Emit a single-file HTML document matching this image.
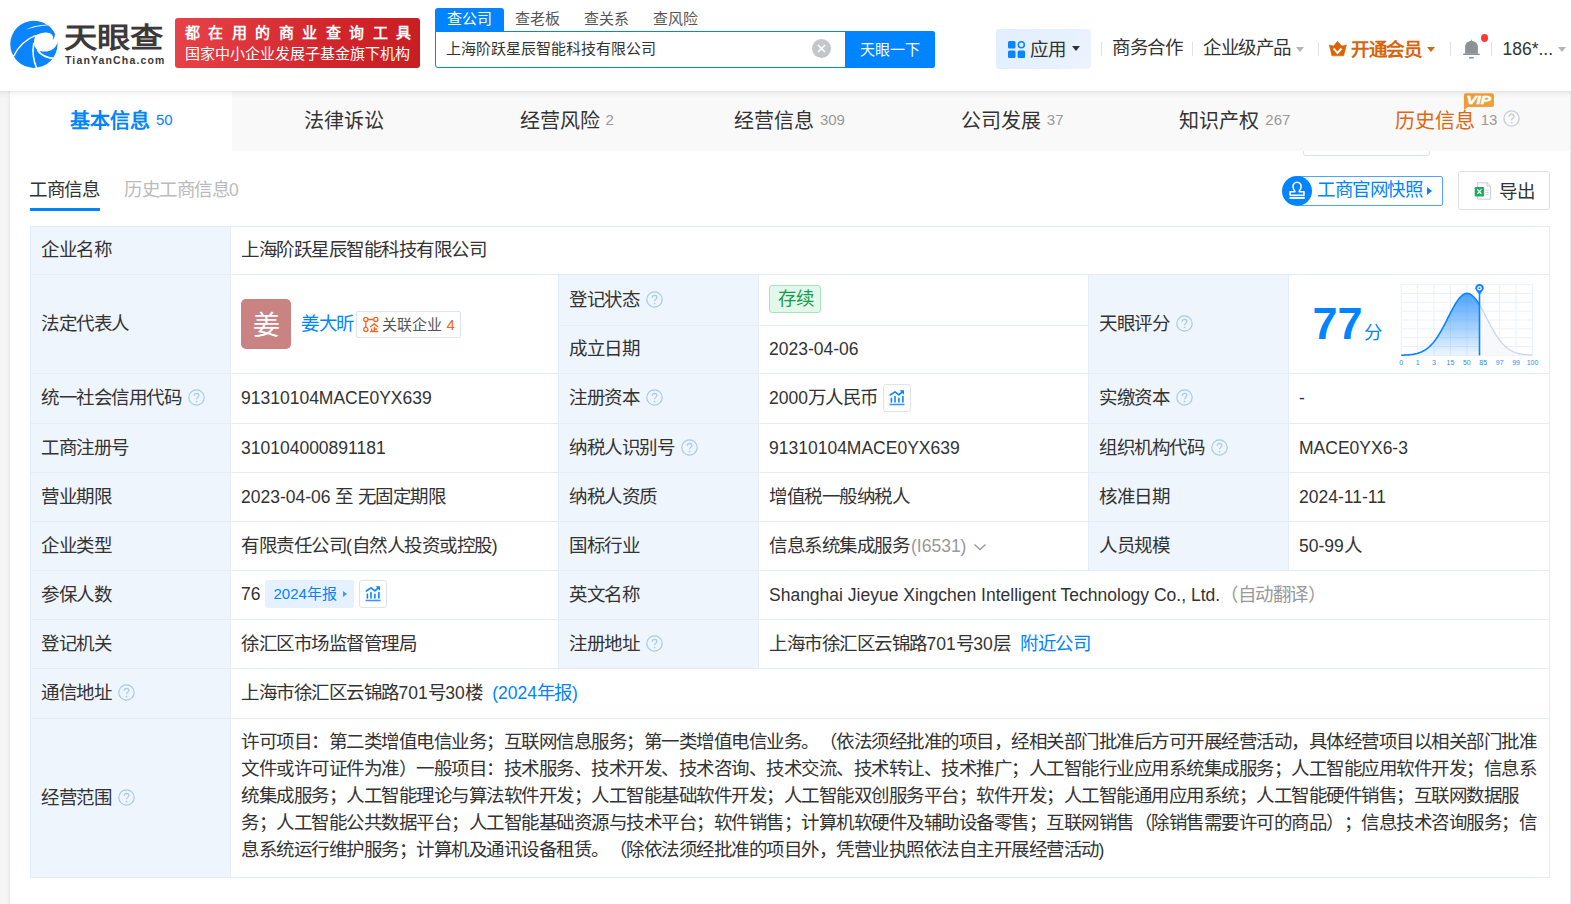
<!DOCTYPE html>
<html lang="zh-CN"><head><meta charset="utf-8">
<style>
*{box-sizing:border-box;margin:0;padding:0}
html,body{width:1571px;height:904px;overflow:hidden}
body{text-spacing-trim:space-all;font-feature-settings:"chws" 0,"halt" 0;background:#f5f5f5;font-family:"Liberation Sans",sans-serif;color:#333;position:relative}
.abs{position:absolute}
#hdr{position:absolute;left:0;top:0;width:1571px;height:91px;background:#fff}
#card{position:absolute;left:10px;top:91px;width:1560px;height:813px;background:#fff}
#rstrip{position:absolute;left:1570px;top:91px;width:1px;height:813px;background:#ebebeb}
.tabbar{position:absolute;left:10px;top:91px;width:1560px;height:60px;background:#f9f9f9}
.tab{position:absolute;top:91px;height:60px;padding-bottom:3px;display:flex;align-items:center;justify-content:center;font-size:20px;color:#333;white-space:nowrap}
.tab .n{font-size:15px;color:#999;margin-left:6px}
.cell{position:absolute;display:flex;align-items:center;padding-left:10px;font-size:17.5px;white-space:nowrap}
.lb{background:#eef5fd}
.hl{position:absolute;height:1px;background:#e3edf7}
.vl{position:absolute;width:1px;background:#e3edf7}
.q{display:inline-block;width:17px;height:17px;border:1.3px solid #a9cdec;border-radius:50%;color:#a9cdec;font-size:12px;line-height:14px;text-align:center;margin-left:7px;font-family:"Liberation Sans",sans-serif}
.blue{color:#0084ff}
.gray{color:#999}
.avatar{display:inline-block;width:50px;height:50px;border-radius:5px;background:#c98383;color:#fff;font-size:27px;line-height:54px;text-align:center}
.rel{display:inline-flex;align-items:center;height:27px;border:1px solid #dfe3ea;border-radius:2px;padding:0 5px 0 6px;margin-left:2px;font-size:15px;color:#555;position:relative;top:1px}
.tag{display:inline-block;height:28px;line-height:26px;padding:0 7px 0 8px;position:relative;top:-1px;border:1px solid #a9e3c0;background:#e2f8ea;color:#179c4c;border-radius:3px;font-size:17.5px}
.score{font-size:45px;font-weight:bold;color:#0084ff;margin-left:13.5px;line-height:50px}
.fen{font-size:17.5px;color:#0084ff;margin-left:1px;margin-top:14px}
.ib{display:inline-flex;align-items:center;justify-content:center;width:28px;height:28px;border:1px solid #dfe3ea;border-radius:3px;margin-left:5px}
.rep{display:inline-flex;align-items:center;height:28px;padding:0 7px 0 8px;background:#e5f1fe;color:#0084ff;border-radius:3px;font-size:15px;margin-left:5px}
.tri{display:inline-block;border-left:4.5px solid #3d98ff;border-top:3.5px solid transparent;border-bottom:3.5px solid transparent;margin-left:6px}
.scope{white-space:nowrap;line-height:27px;font-size:17.5px;position:relative;top:-1px}
.c{font-style:normal;font-size:18.5px;letter-spacing:-1.5px;line-height:0;position:relative;top:0px}
.rel .c,.rep .c,.avatar .c{letter-spacing:0;font-size:inherit;top:0}
.in{display:block;white-space:nowrap;line-height:24px;margin-top:-1px}
.in .avatar,.in .rel,.in .tag,.in .ib,.in .rep,.in svg,.in .q{vertical-align:middle}
.qi{margin-left:7px;position:relative;top:-1.5px}
</style></head><body>
<div id="hdr">
<svg width="52" height="52" viewBox="0 0 52 52" style="position:absolute;left:8px;top:18px">
<circle cx="25.9" cy="26.3" r="23.6" fill="#0a84ff"/>
<path d="M17.6,11.8 C23,8.6 31,6.6 40.5,6.4 L41,7.2 C33,7.6 24,9.6 17.6,11.8 Z" fill="#fff"/>
<path d="M5.2,38.8 C10,29 17,21.5 27.8,17.4" fill="none" stroke="#fff" stroke-width="1.5"/>
<path d="M27.4,17.6 C31,15.6 35,14.5 38.5,14.6 C42.5,14.8 45,17 45.2,19.6 C45.3,20.5 45,21.3 44.6,22.4 C45.8,21.2 46.6,19 46.9,16.5 L52,16.5 L52,24.2 L49.6,24.2 C48.5,28.5 45,32 40,33.2 C36,34 32,33.2 29.9,32.4 C28,31 26.6,28.5 25.9,26.2 C25.9,23 26.5,19.5 27.4,17.6 Z" fill="#fff"/>
<path d="M25.8,25 C24.4,33 25,42 28.8,50.5" fill="none" stroke="#fff" stroke-width="1.6"/>
<path d="M29.4,32 C32,36 36.5,39.5 46.5,40.6" fill="none" stroke="#fff" stroke-width="1.8"/>
</svg>
<div class="abs" id="logotxt" style="left:63.5px;top:21.5px;font-size:33.3px;font-weight:700;color:#3d393a;letter-spacing:0px;line-height:40px;transform:scaleY(0.84);transform-origin:0 0">天眼查</div>
<div class="abs" style="left:65px;top:54px;font-size:10.5px;font-weight:bold;color:#3b3738;letter-spacing:1.15px;line-height:12px">TianYanCha.com</div>
<div class="abs" style="left:175px;top:18px;width:245px;height:50px;border-radius:3px;background:linear-gradient(100deg,#e8434a 0%,#d2262c 60%,#c81d23 100%)"></div>
<div class="abs" style="left:185px;top:23px;width:226px;font-size:15px;font-weight:bold;color:#fff;line-height:20px;display:flex;justify-content:space-between"><span>都</span><span>在</span><span>用</span><span>的</span><span>商</span><span>业</span><span>查</span><span>询</span><span>工</span><span>具</span></div>
<div class="abs" style="left:184.5px;top:44px;font-size:15px;font-weight:500;color:#fff;line-height:20px;letter-spacing:0px">国家中小企业发展子基金旗下机构</div>

<div class="abs" style="left:435px;top:8px;width:69px;height:24px;background:#0084ff;border-radius:3px 3px 0 0"></div>
<div class="abs" style="left:447px;top:8px;font-size:15px;color:#fff;line-height:22px">查公司</div>
<div class="abs" style="left:515px;top:8px;font-size:15px;color:#555;line-height:22px">查老板</div>
<div class="abs" style="left:584px;top:8px;font-size:15px;color:#555;line-height:22px">查关系</div>
<div class="abs" style="left:653px;top:8px;font-size:15px;color:#555;line-height:22px">查风险</div>
<div class="abs" style="left:435px;top:31px;width:500px;height:37px;border:1px solid #0084ff;border-radius:0 3px 3px 3px;background:#fff"></div>
<div class="abs" style="left:446px;top:38px;font-size:15px;color:#333;line-height:22px">上海阶跃星辰智能科技有限公司</div>
<div class="abs" style="left:812px;top:39px;width:19px;height:19px;border-radius:50%;background:#c4c6cc"></div>
<svg class="abs" style="left:812px;top:39px" width="19" height="19"><path d="M6,6 L13,13 M13,6 L6,13" stroke="#fff" stroke-width="1.6"/></svg>
<div class="abs" style="left:845px;top:31px;width:90px;height:37px;background:#0084ff;border-radius:0 3px 3px 0;color:#fff;font-size:15px;line-height:37px;text-align:center">天眼一下</div>

<div class="abs" style="left:996px;top:29px;width:95px;height:40px;border-radius:4px;background:linear-gradient(120deg,#e2efff 0%,#e6f1ff 60%,#edf3fc 100%)"></div>
<svg class="abs" style="left:1007.5px;top:40.5px" width="18" height="18" viewBox="0 0 18 18"><rect x="0" y="0" width="7.5" height="7.5" rx="1.5" fill="#0a84ff"/><circle cx="13.3" cy="3.8" r="3" fill="none" stroke="#0a84ff" stroke-width="1.6"/><rect x="0" y="9.6" width="7.5" height="7.5" rx="1.5" fill="#0a84ff"/><rect x="9.6" y="9.6" width="7.5" height="7.5" rx="1.5" fill="#0a84ff"/></svg>
<div class="abs" style="left:1030px;top:37.5px;font-size:17.5px;color:#333;line-height:24px"><i class="c">应用</i></div>
<div class="abs caret" style="left:1072px;top:46px;border-top:5px solid #333;border-left:4px solid transparent;border-right:4px solid transparent"></div>
<div class="abs" style="left:1101px;top:42px;width:1px;height:14px;background:#e2e2e2"></div>
<div class="abs" style="left:1112px;top:36px;font-size:17.5px;color:#333;line-height:24px"><i class="c">商务合作</i></div>
<div class="abs" style="left:1192px;top:42px;width:1px;height:14px;background:#e2e2e2"></div>
<div class="abs" style="left:1203px;top:36px;font-size:17.5px;color:#333;line-height:24px"><i class="c">企业级产品</i></div>
<div class="abs" style="left:1296px;top:47px;border-top:5px solid #b5b5b5;border-left:4.5px solid transparent;border-right:4.5px solid transparent"></div>
<div class="abs" style="left:1318px;top:42px;width:1px;height:14px;background:#e2e2e2"></div>
<svg class="abs" style="left:1329px;top:41px" width="18" height="16" viewBox="0 0 18 16"><path d="M0.3,3.9 L4.6,5.1 L8.5,0.3 L12.7,5.1 L17.4,3.9 L14.7,14.8 L2.9,14.8 Z" fill="#d9650b" stroke="#d9650b" stroke-width="0.6" stroke-linejoin="round"/><path d="M4.7,7.5 L8.5,12 L12.5,7.5" stroke="#fff" stroke-width="1.9" fill="none"/></svg>
<div class="abs" style="left:1351px;top:37.5px;font-size:17.5px;font-weight:bold;color:#d9650b;line-height:24px"><i class="c">开通会员</i></div>
<div class="abs" style="left:1427px;top:47px;border-top:5px solid #d9650b;border-left:4.5px solid transparent;border-right:4.5px solid transparent"></div>
<div class="abs" style="left:1450px;top:42px;width:1px;height:14px;background:#e2e2e2"></div>
<svg class="abs" style="left:1462px;top:38px" width="20" height="22" viewBox="0 0 20 22"><path d="M9.4,0.9 L10.2,3.4 L8.6,3.4 Z" fill="#8e9196"/><path d="M3.1,15.8 L3.1,9.2 C3.1,5.3 5.8,3.1 9.4,3.1 C13,3.1 15.9,5.3 15.9,9.2 L15.9,15.8 Z" fill="#8e9196"/><rect x="1.1" y="15.6" width="16.6" height="1.4" rx="0.6" fill="#8e9196"/><rect x="7.1" y="19" width="4.7" height="1.5" fill="#8e9196"/></svg>
<div class="abs" style="left:1480.9px;top:34.2px;width:7.2px;height:7.5px;border-radius:50%;background:#fd3a2f"></div>
<div class="abs" style="left:1491px;top:42px;width:1px;height:14px;background:#e2e2e2"></div>
<div class="abs" style="left:1502.5px;top:37px;font-size:17.5px;color:#333;line-height:24px">186*...</div>
<div class="abs" style="left:1558px;top:47px;border-top:5px solid #b5b5b5;border-left:4.5px solid transparent;border-right:4.5px solid transparent"></div>
</div>
<div id="card"></div><div id="rstrip"></div>
<div class="abs" style="left:1303px;top:140px;width:127px;height:16px;border:1px solid #dde1ea;border-radius:3px;background:#fff"></div>
<div class="tabbar"></div>
<div class="abs" style="left:10px;top:91px;width:222px;height:60px;background:#fff"></div>
<div class="abs" style="left:0;top:91px;width:10px;height:813px;background:linear-gradient(90deg,#f5f5f5 0,#f5f5f5 7px,#eaeaea 10px)"></div>
<div class="abs" style="left:0;top:91px;width:1571px;height:7px;background:linear-gradient(rgba(0,0,0,0.075),rgba(0,0,0,0.02) 50%,rgba(0,0,0,0))"></div>
<div class="tab" style="left:10px;width:222.7px;color:#0084ff;font-weight:bold">基本信息<span class="n" style="color:#0084ff;font-weight:normal">50</span></div>
<div class="tab" style="left:232.7px;width:222.7px">法律诉讼</div>
<div class="tab" style="left:455.4px;width:222.7px">经营风险<span class="n">2</span></div>
<div class="tab" style="left:678.1px;width:222.7px">经营信息<span class="n">309</span></div>
<div class="tab" style="left:900.8px;width:222.7px">公司发展<span class="n">37</span></div>
<div class="tab" style="left:1123.5px;width:222.7px">知识产权<span class="n">267</span></div>
<div class="tab" style="left:1346.2px;width:222.7px;color:#e0660f">历史信息<span class="n">13</span><svg width="17" height="17" viewBox="0 0 17 17" style="margin-left:6px;position:relative;top:-1px"><circle cx="8.5" cy="8.5" r="7.6" fill="none" stroke="#c5d0dc" stroke-width="1.4"/><path d="M6.1,6.7 C6.1,5.1 7.2,4.3 8.5,4.3 C10,4.3 11,5.2 11,6.5 C11,8 8.6,8.3 8.6,10.4" fill="none" stroke="#c5d0dc" stroke-width="1.4"/><circle cx="8.6" cy="12.6" r="0.95" fill="#c5d0dc"/></svg></div>
<svg class="abs" style="left:1463px;top:93px" width="32" height="18" viewBox="0 0 32 18"><defs><linearGradient id="vg" x1="0" y1="0" x2="1" y2="1"><stop offset="0" stop-color="#ec9a2e"/><stop offset="1" stop-color="#eea443"/></linearGradient></defs><path d="M2.9,0.2 L29,0.2 Q31,0.2 31,2.2 L31,12 Q31,14 29,14 L4.9,14 L0.9,17.2 L0.9,2.2 Q0.9,0.2 2.9,0.2Z" fill="url(#vg)"/><text x="3.4" y="11.1" font-family="Liberation Sans" font-weight="bold" font-style="italic" font-size="11.5" fill="#fff" stroke="#fff" stroke-width="0.5" textLength="24.6" lengthAdjust="spacingAndGlyphs">VIP</text></svg>

<div class="abs" style="left:29px;top:177.5px;font-size:17.5px;color:#333;line-height:24px"><i class="c">工商信息</i></div>
<div class="abs" style="left:30px;top:208px;width:70px;height:3px;background:#0084ff"></div>
<div class="abs" style="left:124px;top:177.5px;font-size:17.5px;color:#bbb;line-height:24px"><i class="c">历史工商信息</i>0</div>

<div class="abs" style="left:1297px;top:176px;width:146px;height:30px;border:1px solid #4ca5ff;border-radius:2px"></div>
<svg class="abs" style="left:1282px;top:176px" width="30" height="30" viewBox="0 0 30 30"><circle cx="15" cy="15" r="15" fill="#0084ff"/><path d="M8.1,19.2 L8.1,15.7 L12.9,15.7 C12.9,14.6 11.2,13.3 11,11 A4.1,4.1 0 1 1 19.1,11 C18.9,13.3 17.1,14.6 17.1,15.7 L22,15.7 L22,19.2 Z" fill="none" stroke="#fff" stroke-width="1.6" stroke-linejoin="round"/><rect x="7.5" y="20.9" width="15.2" height="2" fill="#fff"/></svg>
<div class="abs" style="left:1317px;top:178px;font-size:17.5px;color:#0084ff;line-height:24px"><i class="c">工商官网快照</i></div>
<div class="abs" style="left:1427px;top:187px;border-left:5px solid #0084ff;border-top:4px solid transparent;border-bottom:4px solid transparent"></div>

<div class="abs" style="left:1458px;top:171px;width:92px;height:39px;border:1px solid #dcdfe6;border-radius:3px"></div>
<svg class="abs" style="left:1474px;top:182px" width="18" height="18" viewBox="0 0 18 18"><path d="M3.5,0.8 L13.2,0.8 L16.6,4.2 L16.6,17.2 L3.5,17.2 Z" fill="#fff" stroke="#c9cdd5" stroke-width="1"/><path d="M13.2,0.8 L13.2,4.2 L16.6,4.2" fill="none" stroke="#c9cdd5" stroke-width="1"/><path d="M11.2,8.4 L14.7,8.4 M11.2,10.4 L14.7,10.4 M11.2,12.4 L14.7,12.4" stroke="#c9cdd5" stroke-width="0.9"/><rect x="0.7" y="4.9" width="9.4" height="9.5" rx="1" fill="#1aad5c"/><path d="M3.4,7.4 L7.4,11.9 M7.4,7.4 L3.4,11.9" stroke="#fff" stroke-width="1.3"/></svg>
<div class="abs" style="left:1499px;top:180px;font-size:17.5px;color:#333;line-height:24px"><i class="c">导出</i></div>

<!--TABLE-->
<div class="abs" style="left:31px;top:227px;width:199px;height:650px;background:#eef5fd"></div>
<div class="abs" style="left:559px;top:275px;width:199px;height:393px;background:#eef5fd"></div>
<div class="abs" style="left:1089px;top:275px;width:199px;height:295px;background:#eef5fd"></div>
<div class="abs" style="left:30px;top:226px;width:1520px;height:1px;background:#e3edf7"></div>
<div class="abs" style="left:30px;top:274px;width:1520px;height:1px;background:#e3edf7"></div>
<div class="abs" style="left:30px;top:373px;width:1520px;height:1px;background:#e3edf7"></div>
<div class="abs" style="left:30px;top:423px;width:1520px;height:1px;background:#e3edf7"></div>
<div class="abs" style="left:30px;top:472px;width:1520px;height:1px;background:#e3edf7"></div>
<div class="abs" style="left:30px;top:521px;width:1520px;height:1px;background:#e3edf7"></div>
<div class="abs" style="left:30px;top:570px;width:1520px;height:1px;background:#e3edf7"></div>
<div class="abs" style="left:30px;top:619px;width:1520px;height:1px;background:#e3edf7"></div>
<div class="abs" style="left:30px;top:668px;width:1520px;height:1px;background:#e3edf7"></div>
<div class="abs" style="left:30px;top:718px;width:1520px;height:1px;background:#e3edf7"></div>
<div class="abs" style="left:30px;top:877px;width:1520px;height:1px;background:#e3edf7"></div>
<div class="abs" style="left:558px;top:325px;width:530px;height:1px;background:#e3edf7"></div>
<div class="abs" style="left:30px;top:226px;width:1px;height:652px;background:#e3edf7"></div>
<div class="abs" style="left:1549px;top:226px;width:1px;height:652px;background:#e3edf7"></div>
<div class="abs" style="left:230px;top:226px;width:1px;height:652px;background:#e3edf7"></div>
<div class="abs" style="left:558px;top:274px;width:1px;height:394px;background:#e3edf7"></div>
<div class="abs" style="left:758px;top:274px;width:1px;height:394px;background:#e3edf7"></div>
<div class="abs" style="left:1088px;top:274px;width:1px;height:296px;background:#e3edf7"></div>
<div class="abs" style="left:1288px;top:274px;width:1px;height:296px;background:#e3edf7"></div>
<div class="cell" style="left:31px;top:227px;height:47px;"><div class="in"><i class="c">企业名称</i></div></div>
<div class="cell" style="left:31px;top:275px;height:98px;"><div class="in"><i class="c">法定代表人</i></div></div>
<div class="cell" style="left:31px;top:374px;height:49px;"><div class="in"><i class="c">统一社会信用代码</i><svg class="qi" width="17" height="17" viewBox="0 0 17 17"><circle cx="8.5" cy="8.5" r="7.7" fill="none" stroke="#a8cae8" stroke-width="1.2"/><path d="M6.2,6.7 C6.2,5.2 7.2,4.4 8.5,4.4 C9.9,4.4 10.9,5.3 10.9,6.5 C10.9,8 8.6,8.3 8.6,10.3" fill="none" stroke="#a8cae8" stroke-width="1.2"/><circle cx="8.6" cy="12.5" r="0.85" fill="#a8cae8"/></svg></div></div>
<div class="cell" style="left:31px;top:424px;height:48px;"><div class="in"><i class="c">工商注册号</i></div></div>
<div class="cell" style="left:31px;top:473px;height:48px;"><div class="in"><i class="c">营业期限</i></div></div>
<div class="cell" style="left:31px;top:522px;height:48px;"><div class="in"><i class="c">企业类型</i></div></div>
<div class="cell" style="left:31px;top:571px;height:48px;"><div class="in"><i class="c">参保人数</i></div></div>
<div class="cell" style="left:31px;top:620px;height:48px;"><div class="in"><i class="c">登记机关</i></div></div>
<div class="cell" style="left:31px;top:669px;height:49px;"><div class="in"><i class="c">通信地址</i><svg class="qi" width="17" height="17" viewBox="0 0 17 17"><circle cx="8.5" cy="8.5" r="7.7" fill="none" stroke="#a8cae8" stroke-width="1.2"/><path d="M6.2,6.7 C6.2,5.2 7.2,4.4 8.5,4.4 C9.9,4.4 10.9,5.3 10.9,6.5 C10.9,8 8.6,8.3 8.6,10.3" fill="none" stroke="#a8cae8" stroke-width="1.2"/><circle cx="8.6" cy="12.5" r="0.85" fill="#a8cae8"/></svg></div></div>
<div class="cell" style="left:31px;top:719px;height:158px;"><div class="in"><i class="c">经营范围</i><svg class="qi" width="17" height="17" viewBox="0 0 17 17"><circle cx="8.5" cy="8.5" r="7.7" fill="none" stroke="#a8cae8" stroke-width="1.2"/><path d="M6.2,6.7 C6.2,5.2 7.2,4.4 8.5,4.4 C9.9,4.4 10.9,5.3 10.9,6.5 C10.9,8 8.6,8.3 8.6,10.3" fill="none" stroke="#a8cae8" stroke-width="1.2"/><circle cx="8.6" cy="12.5" r="0.85" fill="#a8cae8"/></svg></div></div>
<div class="cell" style="left:231px;top:227px;height:47px;"><div class="in"><i class="c">上海阶跃星辰智能科技有限公司</i></div></div>
<div class="cell" style="left:231px;top:275px;height:98px;"><div class="in"><span class="avatar"><i class="c">姜</i></span><span class="blue" style="margin-left:10px;position:relative;top:1.5px"><i class="c">姜大昕</i></span><span class="rel"><svg width="16" height="16" viewBox="0 0 16 16" style="margin-right:3px;position:relative;top:0.5px"><g fill="none" stroke="#f5641e" stroke-width="1.3"><circle cx="2.8" cy="2.5" r="2.1"/><circle cx="12.8" cy="2.5" r="2.1"/><circle cx="2.8" cy="12.5" r="2.1"/><path d="M4.9,2.5 L10.7,2.5 M2.8,4.6 L2.8,10.4 M7.2,10 L11.1,6.9 L15.2,10 M11.3,9.8 L11.3,14.2 M11.3,12 L14.1,12 M8.7,11.5 L8.7,14.2"/><path d="M7.2,14.5 L15.2,14.5" stroke-width="1.5"/></g></svg><i class="c">关联企业</i><span style="color:#f5641e;margin-left:5px">4</span></span></div></div>
<div class="cell" style="left:559px;top:275px;height:50px;"><div class="in"><i class="c">登记状态</i><svg class="qi" width="17" height="17" viewBox="0 0 17 17"><circle cx="8.5" cy="8.5" r="7.7" fill="none" stroke="#a8cae8" stroke-width="1.2"/><path d="M6.2,6.7 C6.2,5.2 7.2,4.4 8.5,4.4 C9.9,4.4 10.9,5.3 10.9,6.5 C10.9,8 8.6,8.3 8.6,10.3" fill="none" stroke="#a8cae8" stroke-width="1.2"/><circle cx="8.6" cy="12.5" r="0.85" fill="#a8cae8"/></svg></div></div>
<div class="cell" style="left:559px;top:326px;height:47px;"><div class="in"><i class="c">成立日期</i></div></div>
<div class="cell" style="left:759px;top:275px;height:50px;"><div class="in"><span class="tag"><i class="c">存续</i></span></div></div>
<div class="cell" style="left:759px;top:326px;height:47px;"><div class="in">2023-04-06</div></div>
<div class="cell" style="left:1089px;top:275px;height:98px;"><div class="in"><i class="c">天眼评分</i><svg class="qi" width="17" height="17" viewBox="0 0 17 17"><circle cx="8.5" cy="8.5" r="7.7" fill="none" stroke="#a8cae8" stroke-width="1.2"/><path d="M6.2,6.7 C6.2,5.2 7.2,4.4 8.5,4.4 C9.9,4.4 10.9,5.3 10.9,6.5 C10.9,8 8.6,8.3 8.6,10.3" fill="none" stroke="#a8cae8" stroke-width="1.2"/><circle cx="8.6" cy="12.5" r="0.85" fill="#a8cae8"/></svg></div></div>
<div class="cell" style="left:1289px;top:275px;height:98px;"><div class="in"><span class="score">77</span><span class="fen"><i class="c">分</i></span></div></div>
<div class="cell" style="left:231px;top:374px;height:49px;"><div class="in">91310104MACE0YX639</div></div>
<div class="cell" style="left:559px;top:374px;height:49px;"><div class="in"><i class="c">注册资本</i><svg class="qi" width="17" height="17" viewBox="0 0 17 17"><circle cx="8.5" cy="8.5" r="7.7" fill="none" stroke="#a8cae8" stroke-width="1.2"/><path d="M6.2,6.7 C6.2,5.2 7.2,4.4 8.5,4.4 C9.9,4.4 10.9,5.3 10.9,6.5 C10.9,8 8.6,8.3 8.6,10.3" fill="none" stroke="#a8cae8" stroke-width="1.2"/><circle cx="8.6" cy="12.5" r="0.85" fill="#a8cae8"/></svg></div></div>
<div class="cell" style="left:759px;top:374px;height:49px;"><div class="in"><span style="position:relative;top:1.5px">2000<i class="c">万人民币</i></span><span class="ib"><svg width="16" height="16" viewBox="0 0 16 16"><path d="M0.5,14.5 L15.5,14.5" stroke="#3d95ff" stroke-width="1.6"/><path d="M2.4,8.3 L2.4,12 M6,6.6 L6,12 M9.9,8.3 L9.9,12 M13.9,6.6 L13.9,12" stroke="#0a84ff" stroke-width="1.6" stroke-linecap="round"/><path d="M1.3,5 L6,1.9 L9.9,4.9 L13.3,1.8" fill="none" stroke="#0a84ff" stroke-width="1.6" stroke-linejoin="round" stroke-linecap="round"/><path d="M10.6,0.3 L15,0.3 L15,4.7 Z" fill="#0a84ff"/></svg></span></div></div>
<div class="cell" style="left:1089px;top:374px;height:49px;"><div class="in"><i class="c">实缴资本</i><svg class="qi" width="17" height="17" viewBox="0 0 17 17"><circle cx="8.5" cy="8.5" r="7.7" fill="none" stroke="#a8cae8" stroke-width="1.2"/><path d="M6.2,6.7 C6.2,5.2 7.2,4.4 8.5,4.4 C9.9,4.4 10.9,5.3 10.9,6.5 C10.9,8 8.6,8.3 8.6,10.3" fill="none" stroke="#a8cae8" stroke-width="1.2"/><circle cx="8.6" cy="12.5" r="0.85" fill="#a8cae8"/></svg></div></div>
<div class="cell" style="left:1289px;top:374px;height:49px;"><div class="in">-</div></div>
<div class="cell" style="left:231px;top:424px;height:48px;"><div class="in">310104000891181</div></div>
<div class="cell" style="left:559px;top:424px;height:48px;"><div class="in"><i class="c">纳税人识别号</i><svg class="qi" width="17" height="17" viewBox="0 0 17 17"><circle cx="8.5" cy="8.5" r="7.7" fill="none" stroke="#a8cae8" stroke-width="1.2"/><path d="M6.2,6.7 C6.2,5.2 7.2,4.4 8.5,4.4 C9.9,4.4 10.9,5.3 10.9,6.5 C10.9,8 8.6,8.3 8.6,10.3" fill="none" stroke="#a8cae8" stroke-width="1.2"/><circle cx="8.6" cy="12.5" r="0.85" fill="#a8cae8"/></svg></div></div>
<div class="cell" style="left:759px;top:424px;height:48px;"><div class="in">91310104MACE0YX639</div></div>
<div class="cell" style="left:1089px;top:424px;height:48px;"><div class="in"><i class="c">组织机构代码</i><svg class="qi" width="17" height="17" viewBox="0 0 17 17"><circle cx="8.5" cy="8.5" r="7.7" fill="none" stroke="#a8cae8" stroke-width="1.2"/><path d="M6.2,6.7 C6.2,5.2 7.2,4.4 8.5,4.4 C9.9,4.4 10.9,5.3 10.9,6.5 C10.9,8 8.6,8.3 8.6,10.3" fill="none" stroke="#a8cae8" stroke-width="1.2"/><circle cx="8.6" cy="12.5" r="0.85" fill="#a8cae8"/></svg></div></div>
<div class="cell" style="left:1289px;top:424px;height:48px;"><div class="in">MACE0YX6-3</div></div>
<div class="cell" style="left:231px;top:473px;height:48px;"><div class="in">2023-04-06 <i class="c">至</i> <i class="c">无固定期限</i></div></div>
<div class="cell" style="left:559px;top:473px;height:48px;"><div class="in"><i class="c">纳税人资质</i></div></div>
<div class="cell" style="left:759px;top:473px;height:48px;"><div class="in"><i class="c">增值税一般纳税人</i></div></div>
<div class="cell" style="left:1089px;top:473px;height:48px;"><div class="in"><i class="c">核准日期</i></div></div>
<div class="cell" style="left:1289px;top:473px;height:48px;"><div class="in">2024-11-11</div></div>
<div class="cell" style="left:231px;top:522px;height:48px;"><div class="in"><i class="c">有限责任公司</i>(<i class="c">自然人投资或控股</i>)</div></div>
<div class="cell" style="left:559px;top:522px;height:48px;"><div class="in"><i class="c">国标行业</i></div></div>
<div class="cell" style="left:759px;top:522px;height:48px;"><div class="in"><i class="c">信息系统集成服务</i><span class="gray" style="margin-left:2px">(I6531)</span><svg width="14" height="10" viewBox="0 0 14 10" style="margin-left:7px"><path d="M1.5,2.5 L7,7.5 L12.5,2.5" fill="none" stroke="#999" stroke-width="1.4"/></svg></div></div>
<div class="cell" style="left:1089px;top:522px;height:48px;"><div class="in"><i class="c">人员规模</i></div></div>
<div class="cell" style="left:1289px;top:522px;height:48px;"><div class="in">50-99<i class="c">人</i></div></div>
<div class="cell" style="left:231px;top:571px;height:48px;"><div class="in">76<span class="rep" style="position:relative;top:-1px">2024<i class="c">年报</i><span class="tri"></span></span><span class="ib" style="margin-left:5px;position:relative;top:-0.5px"><svg width="16" height="16" viewBox="0 0 16 16"><path d="M0.5,14.5 L15.5,14.5" stroke="#3d95ff" stroke-width="1.6"/><path d="M2.4,8.3 L2.4,12 M6,6.6 L6,12 M9.9,8.3 L9.9,12 M13.9,6.6 L13.9,12" stroke="#0a84ff" stroke-width="1.6" stroke-linecap="round"/><path d="M1.3,5 L6,1.9 L9.9,4.9 L13.3,1.8" fill="none" stroke="#0a84ff" stroke-width="1.6" stroke-linejoin="round" stroke-linecap="round"/><path d="M10.6,0.3 L15,0.3 L15,4.7 Z" fill="#0a84ff"/></svg></span></div></div>
<div class="cell" style="left:559px;top:571px;height:48px;"><div class="in"><i class="c">英文名称</i></div></div>
<div class="cell" style="left:759px;top:571px;height:48px;"><div class="in">Shanghai Jieyue Xingchen Intelligent Technology Co., Ltd.<span class="gray"><i class="c">（自动翻译）</i></span></div></div>
<div class="cell" style="left:231px;top:620px;height:48px;"><div class="in"><i class="c">徐汇区市场监督管理局</i></div></div>
<div class="cell" style="left:559px;top:620px;height:48px;"><div class="in"><i class="c">注册地址</i><svg class="qi" width="17" height="17" viewBox="0 0 17 17"><circle cx="8.5" cy="8.5" r="7.7" fill="none" stroke="#a8cae8" stroke-width="1.2"/><path d="M6.2,6.7 C6.2,5.2 7.2,4.4 8.5,4.4 C9.9,4.4 10.9,5.3 10.9,6.5 C10.9,8 8.6,8.3 8.6,10.3" fill="none" stroke="#a8cae8" stroke-width="1.2"/><circle cx="8.6" cy="12.5" r="0.85" fill="#a8cae8"/></svg></div></div>
<div class="cell" style="left:759px;top:620px;height:48px;"><div class="in"><i class="c">上海市徐汇区云锦路</i>701<i class="c">号</i>30<i class="c">层</i><span class="blue" style="margin-left:10px"><i class="c">附近公司</i></span></div></div>
<div class="cell" style="left:231px;top:669px;height:49px;"><div class="in"><i class="c">上海市徐汇区云锦路</i>701<i class="c">号</i>30<i class="c">楼</i><span class="blue" style="margin-left:10px">(2024<i class="c">年报</i>)</span></div></div>
<div class="cell" style="left:231px;top:719px;height:158px;"><div class="in"><div class="scope"><i class="c">许可项目：第二类增值电信业务；互联网信息服务；第一类增值电信业务。（依法须经批准的项目，经相关部门批准后方可开展经营活动，具体经营项目以相关部门批准</i><br><i class="c">文件或许可证件为准）一般项目：技术服务、技术开发、技术咨询、技术交流、技术转让、技术推广；人工智能行业应用系统集成服务；人工智能应用软件开发；信息系</i><br><i class="c">统集成服务；人工智能理论与算法软件开发；人工智能基础软件开发；人工智能双创服务平台；软件开发；人工智能通用应用系统；人工智能硬件销售；互联网数据服</i><br><i class="c">务；人工智能公共数据平台；人工智能基础资源与技术平台；软件销售；计算机软硬件及辅助设备零售；互联网销售（除销售需要许可的商品）；信息技术咨询服务；信</i><br><i class="c">息系统运行维护服务；计算机及通讯设备租赁。（除依法须经批准的项目外，凭营业执照依法自主开展经营活动</i>)</div></div></div>
<svg class="abs" style="left:1395px;top:278px;position:absolute" width="150" height="95" viewBox="0 0 150 95">
<defs><linearGradient id="gf" x1="0" y1="0" x2="0" y2="1"><stop offset="0" stop-color="#2b93fb" stop-opacity="0.85"/><stop offset="1" stop-color="#2b93fb" stop-opacity="0.08"/></linearGradient></defs>
<path d="M6.2,6.6 L6.2,77.4 M22.61,6.6 L22.61,77.4 M39.03,6.6 L39.03,77.4 M55.44,6.6 L55.44,77.4 M71.85,6.6 L71.85,77.4 M88.26,6.6 L88.26,77.4 M104.67,6.6 L104.67,77.4 M121.09,6.6 L121.09,77.4 M137.5,6.6 L137.5,77.4 M6.2,6.6 L137.5,6.6 M6.2,15.45 L137.5,15.45 M6.2,24.3 L137.5,24.3 M6.2,33.15 L137.5,33.15 M6.2,42.0 L137.5,42.0 M6.2,50.85 L137.5,50.85 M6.2,59.7 L137.5,59.7 M6.2,68.55 L137.5,68.55 M6.2,77.4 L137.5,77.4" stroke="#e9f1fb" stroke-width="1" fill="none"/>
<path d="M6.2,77.4 L6.2,77.25 6.7,77.23 7.2,77.22 7.7,77.2 8.2,77.18 8.7,77.16 9.2,77.14 9.7,77.11 10.2,77.09 10.7,77.06 11.2,77.03 11.7,77.0 12.2,76.96 12.7,76.92 13.2,76.88 13.7,76.84 14.2,76.79 14.7,76.74 15.2,76.69 15.7,76.63 16.2,76.57 16.7,76.5 17.2,76.43 17.7,76.36 18.2,76.27 18.7,76.19 19.2,76.1 19.7,76.0 20.2,75.89 20.7,75.78 21.2,75.66 21.7,75.54 22.2,75.4 22.7,75.26 23.2,75.11 23.7,74.95 24.2,74.78 24.7,74.6 25.2,74.42 25.7,74.22 26.2,74.01 26.7,73.79 27.2,73.55 27.7,73.31 28.2,73.05 28.7,72.78 29.2,72.5 29.7,72.2 30.2,71.89 30.7,71.56 31.2,71.22 31.7,70.86 32.2,70.49 32.7,70.1 33.2,69.69 33.7,69.27 34.2,68.83 34.7,68.37 35.2,67.9 35.7,67.41 36.2,66.89 36.7,66.36 37.2,65.81 37.7,65.25 38.2,64.66 38.7,64.05 39.2,63.43 39.7,62.78 40.2,62.12 40.7,61.44 41.2,60.74 41.7,60.02 42.2,59.28 42.7,58.52 43.2,57.75 43.7,56.95 44.2,56.14 44.7,55.32 45.2,54.47 45.7,53.61 46.2,52.74 46.7,51.85 47.2,50.95 47.7,50.03 48.2,49.11 48.7,48.17 49.2,47.22 49.7,46.26 50.2,45.3 50.7,44.33 51.2,43.35 51.7,42.36 52.2,41.38 52.7,40.39 53.2,39.4 53.7,38.41 54.2,37.42 54.7,36.44 55.2,35.46 55.7,34.49 56.2,33.52 56.7,32.57 57.2,31.62 57.7,30.69 58.2,29.77 58.7,28.87 59.2,27.99 59.7,27.12 60.2,26.27 60.7,25.45 61.2,24.65 61.7,23.87 62.2,23.12 62.7,22.4 63.2,21.71 63.7,21.04 64.2,20.41 64.7,19.81 65.2,19.25 65.7,18.72 66.2,18.22 66.7,17.77 67.2,17.35 67.7,16.97 68.2,16.63 68.7,16.33 69.2,16.07 69.7,15.85 70.2,15.68 70.7,15.54 71.2,15.45 71.7,15.41 72.2,15.4 72.7,15.44 73.2,15.52 73.7,15.64 74.2,15.79 74.7,15.99 75.2,16.23 75.7,16.51 76.2,16.82 76.7,17.17 77.2,17.57 77.7,17.99 78.2,18.46 78.7,18.95 79.2,19.49 79.7,20.05 80.2,20.65 80.7,21.27 81.2,21.93 81.7,22.62 82.2,23.33 82.7,24.07 83.2,24.83 83.7,25.61 84.2,26.42 84.5,26.91 L84.5,77.4 Z" fill="url(#gf)"/>
<path d="M84.5,77.4 L84.5,26.91 85.0,27.75 85.5,28.61 86.0,29.49 86.5,30.38 87.0,31.28 87.5,32.19 88.0,33.12 88.5,34.06 89.0,35.0 89.5,35.95 90.0,36.91 90.5,37.87 91.0,38.83 91.5,39.8 92.0,40.76 92.5,41.72 93.0,42.68 93.5,43.64 94.0,44.59 94.5,45.54 95.0,46.48 95.5,47.41 96.0,48.33 96.5,49.24 97.0,50.14 97.5,51.03 98.0,51.91 98.5,52.78 99.0,53.63 99.5,54.46 100.0,55.29 100.5,56.09 101.0,56.88 101.5,57.66 102.0,58.41 102.5,59.15 103.0,59.88 103.5,60.58 104.0,61.27 104.5,61.94 105.0,62.59 105.5,63.23 106.0,63.84 106.5,64.44 107.0,65.02 107.5,65.58 108.0,66.12 108.5,66.65 109.0,67.15 109.5,67.64 110.0,68.12 110.5,68.57 111.0,69.01 111.5,69.43 112.0,69.84 112.5,70.23 113.0,70.6 113.5,70.96 114.0,71.3 114.5,71.63 115.0,71.95 115.5,72.25 116.0,72.54 116.5,72.81 117.0,73.07 117.5,73.32 118.0,73.56 118.5,73.79 119.0,74.0 119.5,74.21 120.0,74.4 120.5,74.59 121.0,74.76 121.5,74.93 122.0,75.08 122.5,75.23 123.0,75.37 123.5,75.5 124.0,75.63 124.5,75.75 125.0,75.86 125.5,75.96 126.0,76.06 126.5,76.15 127.0,76.24 127.5,76.32 128.0,76.4 128.5,76.47 129.0,76.54 129.5,76.6 130.0,76.66 130.5,76.71 131.0,76.76 131.5,76.81 132.0,76.85 132.5,76.9 133.0,76.93 133.5,76.97 134.0,77.0 134.5,77.04 135.0,77.06 135.5,77.09 136.0,77.12 136.5,77.14 137.0,77.16 137.5,77.18 L137.5,77.4 Z" fill="#f6f8fb"/>
<polyline points="6.2,77.25 6.7,77.23 7.2,77.22 7.7,77.2 8.2,77.18 8.7,77.16 9.2,77.14 9.7,77.11 10.2,77.09 10.7,77.06 11.2,77.03 11.7,77.0 12.2,76.96 12.7,76.92 13.2,76.88 13.7,76.84 14.2,76.79 14.7,76.74 15.2,76.69 15.7,76.63 16.2,76.57 16.7,76.5 17.2,76.43 17.7,76.36 18.2,76.27 18.7,76.19 19.2,76.1 19.7,76.0 20.2,75.89 20.7,75.78 21.2,75.66 21.7,75.54 22.2,75.4 22.7,75.26 23.2,75.11 23.7,74.95 24.2,74.78 24.7,74.6 25.2,74.42 25.7,74.22 26.2,74.01 26.7,73.79 27.2,73.55 27.7,73.31 28.2,73.05 28.7,72.78 29.2,72.5 29.7,72.2 30.2,71.89 30.7,71.56 31.2,71.22 31.7,70.86 32.2,70.49 32.7,70.1 33.2,69.69 33.7,69.27 34.2,68.83 34.7,68.37 35.2,67.9 35.7,67.41 36.2,66.89 36.7,66.36 37.2,65.81 37.7,65.25 38.2,64.66 38.7,64.05 39.2,63.43 39.7,62.78 40.2,62.12 40.7,61.44 41.2,60.74 41.7,60.02 42.2,59.28 42.7,58.52 43.2,57.75 43.7,56.95 44.2,56.14 44.7,55.32 45.2,54.47 45.7,53.61 46.2,52.74 46.7,51.85 47.2,50.95 47.7,50.03 48.2,49.11 48.7,48.17 49.2,47.22 49.7,46.26 50.2,45.3 50.7,44.33 51.2,43.35 51.7,42.36 52.2,41.38 52.7,40.39 53.2,39.4 53.7,38.41 54.2,37.42 54.7,36.44 55.2,35.46 55.7,34.49 56.2,33.52 56.7,32.57 57.2,31.62 57.7,30.69 58.2,29.77 58.7,28.87 59.2,27.99 59.7,27.12 60.2,26.27 60.7,25.45 61.2,24.65 61.7,23.87 62.2,23.12 62.7,22.4 63.2,21.71 63.7,21.04 64.2,20.41 64.7,19.81 65.2,19.25 65.7,18.72 66.2,18.22 66.7,17.77 67.2,17.35 67.7,16.97 68.2,16.63 68.7,16.33 69.2,16.07 69.7,15.85 70.2,15.68 70.7,15.54 71.2,15.45 71.7,15.41 72.2,15.4 72.7,15.44 73.2,15.52 73.7,15.64 74.2,15.79 74.7,15.99 75.2,16.23 75.7,16.51 76.2,16.82 76.7,17.17 77.2,17.57 77.7,17.99 78.2,18.46 78.7,18.95 79.2,19.49 79.7,20.05 80.2,20.65 80.7,21.27 81.2,21.93 81.7,22.62 82.2,23.33 82.7,24.07 83.2,24.83 83.7,25.61 84.2,26.42 84.5,26.91" fill="none" stroke="#0a84ff" stroke-width="1.6"/>
<polyline points="84.5,26.91 85.0,27.75 85.5,28.61 86.0,29.49 86.5,30.38 87.0,31.28 87.5,32.19 88.0,33.12 88.5,34.06 89.0,35.0 89.5,35.95 90.0,36.91 90.5,37.87 91.0,38.83 91.5,39.8 92.0,40.76 92.5,41.72 93.0,42.68 93.5,43.64 94.0,44.59 94.5,45.54 95.0,46.48 95.5,47.41 96.0,48.33 96.5,49.24 97.0,50.14 97.5,51.03 98.0,51.91 98.5,52.78 99.0,53.63 99.5,54.46 100.0,55.29 100.5,56.09 101.0,56.88 101.5,57.66 102.0,58.41 102.5,59.15 103.0,59.88 103.5,60.58 104.0,61.27 104.5,61.94 105.0,62.59 105.5,63.23 106.0,63.84 106.5,64.44 107.0,65.02 107.5,65.58 108.0,66.12 108.5,66.65 109.0,67.15 109.5,67.64 110.0,68.12 110.5,68.57 111.0,69.01 111.5,69.43 112.0,69.84 112.5,70.23 113.0,70.6 113.5,70.96 114.0,71.3 114.5,71.63 115.0,71.95 115.5,72.25 116.0,72.54 116.5,72.81 117.0,73.07 117.5,73.32 118.0,73.56 118.5,73.79 119.0,74.0 119.5,74.21 120.0,74.4 120.5,74.59 121.0,74.76 121.5,74.93 122.0,75.08 122.5,75.23 123.0,75.37 123.5,75.5 124.0,75.63 124.5,75.75 125.0,75.86 125.5,75.96 126.0,76.06 126.5,76.15 127.0,76.24 127.5,76.32 128.0,76.4 128.5,76.47 129.0,76.54 129.5,76.6 130.0,76.66 130.5,76.71 131.0,76.76 131.5,76.81 132.0,76.85 132.5,76.9 133.0,76.93 133.5,76.97 134.0,77.0 134.5,77.04 135.0,77.06 135.5,77.09 136.0,77.12 136.5,77.14 137.0,77.16 137.5,77.18" fill="none" stroke="#ccd6e2" stroke-width="1.3"/>
<path d="M84.5,13 L84.5,77.4" stroke="#0a84ff" stroke-width="1.6"/>
<path d="M80.3,10.2 A4.2,4.2 0 1 1 88.7,10.2 Q88.1,13.2 84.5,16.7 Q80.9,13.2 80.3,10.2 Z" fill="#0a84ff"/>
<circle cx="84.5" cy="10.2" r="2.2" fill="#fff"/>
<circle cx="84.5" cy="10.2" r="1.0" fill="#0a84ff"/>
<text x="6.2" y="87" font-family="Liberation Sans" font-size="7" fill="#2b8ef5" text-anchor="middle">0</text>
<text x="22.61" y="87" font-family="Liberation Sans" font-size="7" fill="#2b8ef5" text-anchor="middle">1</text>
<text x="39.03" y="87" font-family="Liberation Sans" font-size="7" fill="#2b8ef5" text-anchor="middle">3</text>
<text x="55.44" y="87" font-family="Liberation Sans" font-size="7" fill="#2b8ef5" text-anchor="middle">15</text>
<text x="71.85" y="87" font-family="Liberation Sans" font-size="7" fill="#2b8ef5" text-anchor="middle">50</text>
<text x="88.26" y="87" font-family="Liberation Sans" font-size="7" fill="#2b8ef5" text-anchor="middle">85</text>
<text x="104.67" y="87" font-family="Liberation Sans" font-size="7" fill="#2b8ef5" text-anchor="middle">97</text>
<text x="121.09" y="87" font-family="Liberation Sans" font-size="7" fill="#2b8ef5" text-anchor="middle">99</text>
<text x="137.5" y="87" font-family="Liberation Sans" font-size="7" fill="#2b8ef5" text-anchor="middle">100</text>
</svg>
<!--/TABLE-->
</body></html>
